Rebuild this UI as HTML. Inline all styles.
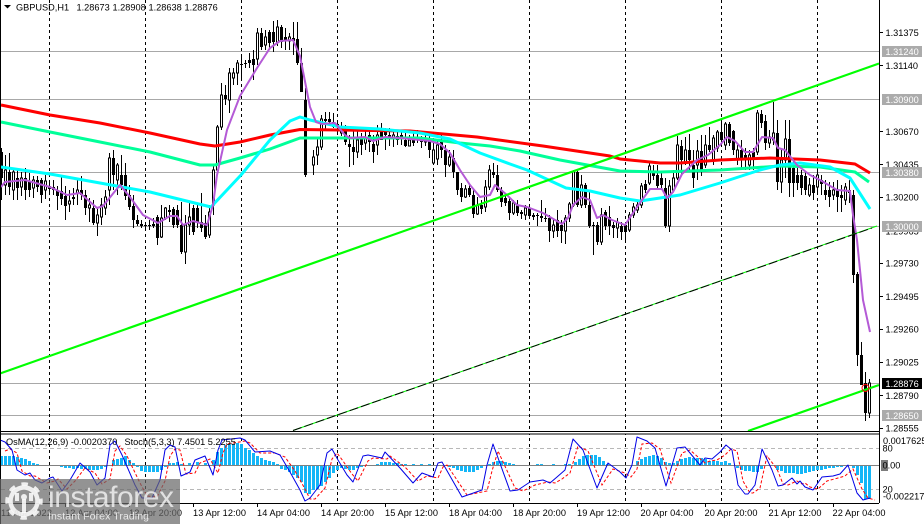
<!DOCTYPE html>
<html><head><meta charset="utf-8"><style>
html,body{margin:0;padding:0;background:#fff;width:924px;height:524px;overflow:hidden}
svg{display:block;position:absolute;left:0;top:0}
text{font-family:"Liberation Sans",sans-serif;font-size:9.2px;fill:#000}
.w{fill:#fff}
</style></head><body>
<svg width="924" height="524" viewBox="0 0 924 524" xmlns="http://www.w3.org/2000/svg">
<rect width="924" height="524" fill="#fff"/>
<!-- horizontal levels -->
<g shape-rendering="crispEdges" stroke="#a8a8a8" stroke-width="1">
<path d="M1 51.5H879M1 99.5H879M1 172.5H879M1 226.5H879M1 383.5H879M1 415.5H879"/>
</g>
<!-- vertical periods -->
<path shape-rendering="crispEdges" d="M49.5 0V503M145.5 0V503M241.5 0V503M337.5 0V503M433.5 0V503M529.5 0V503M625.5 0V503M721.5 0V503M817.5 0V503" stroke="#000" stroke-width="1" stroke-dasharray="3 3" fill="none"/>
<!-- candles -->
<g shape-rendering="crispEdges" fill="none" stroke="#000">
<path stroke-width="1" d="M1.5 148V200M5.5 155V195M9.5 153V195M13.5 168V200M17.5 168V200M21.5 172V196M25.5 168V200M29.5 173V197M33.5 176V198M37.5 176V192M41.5 178V203M45.5 175V199M49.5 182V195M53.5 180V195M57.5 186V210M61.5 176V205M65.5 186V220M69.5 190V212M73.5 188V205M77.5 180V205M81.5 176V200M85.5 190V215M89.5 198V222M93.5 200V225M97.5 207V236M101.5 198V225M105.5 190V215M109.5 153V205M113.5 150V190M117.5 163V195M121.5 155V190M125.5 163V200M129.5 185V210M133.5 195V228M137.5 215V226M141.5 220V228M145.5 222V228M149.5 220V230M153.5 218V228M157.5 215V245M161.5 205V238M165.5 207V220M169.5 205V222M173.5 207V228M177.5 205V228M181.5 202V254M185.5 215V264M189.5 203V235M193.5 205V235M197.5 203V228M201.5 193V232M205.5 215V239M209.5 205V238M213.5 165V215M217.5 125V175M221.5 83V130M225.5 85V105M229.5 68V113M233.5 68V85M237.5 60V85M241.5 55V78M245.5 60V68M249.5 53V68M253.5 50V80M257.5 28V65M261.5 28V50M265.5 30V50M269.5 30V48M273.5 21V52M277.5 20V46M281.5 25V48M285.5 28V50M289.5 33V50M293.5 22V55M297.5 22V65M301.5 48V92M305.5 88V177M313.5 150V175M317.5 137V165M321.5 115V150M325.5 112V130M329.5 112V125M333.5 113V128M337.5 122V135M341.5 122V136M345.5 125V145M349.5 135V167M353.5 130V165M357.5 130V158M361.5 133V155M365.5 128V150M369.5 128V152M373.5 135V163M377.5 125V155M381.5 123V140M385.5 128V150M389.5 128V146M393.5 130V147M397.5 132V145M401.5 130V145M405.5 133V147M409.5 135V146M413.5 133V146M417.5 130V143M421.5 136V148M425.5 133V146M429.5 135V158M433.5 138V164M437.5 140V165M441.5 135V158M445.5 145V177M449.5 150V167M453.5 150V178M457.5 172V195M461.5 183V202M465.5 185V198M469.5 185V197M473.5 190V218M477.5 197V215M481.5 200V214M485.5 180V212M489.5 165V190M493.5 163V178M497.5 165V192M501.5 187V207M505.5 195V206M509.5 198V220M513.5 200V215M517.5 200V216M521.5 210V219M525.5 205V220M529.5 205V218M533.5 213V220M537.5 213V226M541.5 200V222M545.5 208V222M549.5 215V242M553.5 220V238M557.5 210V237M561.5 220V243M565.5 215V244M569.5 202V222M573.5 170V207M577.5 170V207M581.5 175V208M585.5 183V208M589.5 192V228M593.5 222V255M597.5 222V245M601.5 208V245M605.5 210V230M609.5 206V235M613.5 222V238M617.5 218V238M621.5 222V240M625.5 222V243M629.5 212V232M633.5 203V218M637.5 200V213M641.5 183V208M645.5 180V193M649.5 163V185M653.5 165V180M657.5 165V190M661.5 172V190M665.5 178V228M669.5 180V232M673.5 170V192M677.5 136V180M681.5 140V175M685.5 137V165M689.5 134V170M693.5 150V188M697.5 140V180M701.5 135V176M705.5 135V168M709.5 127V152M713.5 135V165M717.5 130V152M721.5 122V142M725.5 122V150M729.5 122V146M733.5 130V155M737.5 145V165M741.5 140V168M745.5 148V170M749.5 150V170M753.5 148V170M757.5 110V155M761.5 110V128M765.5 115V150M769.5 130V148M773.5 102V145M777.5 120V190M781.5 150V193M785.5 120V178M789.5 120V197M793.5 160V197M797.5 165V190M801.5 170V195M805.5 172V195M809.5 178V197M813.5 175V200M817.5 170V192M821.5 175V195M825.5 180V200M829.5 182V207M833.5 182V200M837.5 180V212M841.5 185V212M845.5 183V205M849.5 180V203M853.5 190V283M857.5 272V366M861.5 342V385M865.5 372V421M869.5 379V418"/>
<path stroke-width="3" d="M1.5 152V178M9.5 172V187M17.5 178V188M25.5 178V190M29.5 181V190M37.5 180V187M41.5 180V195M49.5 186V189M53.5 187V190M57.5 190V196M61.5 191V199M65.5 196V206M73.5 197V199M81.5 190V195M85.5 195V208M93.5 208V223M113.5 158V175M121.5 175V185M125.5 175V196M129.5 195V207M133.5 206V220M137.5 220V224M141.5 224V226M145.5 225V226M149.5 225V226M153.5 224V226M157.5 217V238M169.5 210V212M173.5 209V225M177.5 210V225M181.5 225V252M193.5 208V232M197.5 208V222M201.5 222V228M205.5 223V237M225.5 95V99M241.5 64V65M245.5 63V64M249.5 60V63M253.5 59V65M261.5 33V47M269.5 32V43M273.5 32V42M281.5 27V42M285.5 37V41M293.5 38V41M297.5 39V63M301.5 63V92M305.5 100V175M325.5 119V121M329.5 119V122M333.5 122V127M337.5 124V127M345.5 130V142M349.5 144V147M353.5 147V152M361.5 138V145M369.5 135V142M373.5 144V152M381.5 132V140M385.5 131V135M389.5 135V137M397.5 136V140M401.5 135V138M405.5 140V146M413.5 140V143M421.5 138V142M429.5 140V150M441.5 140V150M445.5 150V165M453.5 158V172M457.5 172V190M461.5 188V197M469.5 188V195M473.5 195V214M481.5 205V209M493.5 172V175M497.5 175V190M501.5 190V202M505.5 198V203M509.5 201V213M517.5 205V213M521.5 212V214M529.5 208V216M533.5 215V217M537.5 215V216M541.5 216V218M545.5 218V219M549.5 218V231M557.5 220V231M561.5 225V231M577.5 172V205M585.5 185V205M589.5 205V226M593.5 225V226M597.5 225V242M605.5 212V226M609.5 217V226M613.5 225V228M621.5 226V232M625.5 225V232M645.5 184V190M653.5 172V176M657.5 175V186M661.5 178V185M665.5 188V226M681.5 146V160M689.5 150V160M693.5 165V178M701.5 151V172M709.5 145V150M721.5 132V140M729.5 124V143M733.5 131V150M741.5 150V160M745.5 155V160M753.5 152V158M761.5 114V123M765.5 121V143M777.5 133V182M789.5 139V183M793.5 168V183M797.5 175V183M801.5 175V188M805.5 176V190M813.5 185V193M821.5 180V184M825.5 190V195M829.5 190V197M837.5 190V197M841.5 195V198M849.5 190V193M853.5 195V275M857.5 274V355M861.5 355V385M865.5 383V413"/>
<path stroke-width="1" fill="#fff" d="M4.5 170h2V185h-2zM12.5 172h2V190h-2zM20.5 178h2V187h-2zM32.5 180h2V188h-2zM44.5 181h2V190h-2zM68.5 201h2V204h-2zM76.5 190h2V193h-2zM88.5 205h2V208h-2zM96.5 215h2V223h-2zM100.5 205h2V217h-2zM104.5 197h2V208h-2zM108.5 158h2V190h-2zM116.5 165h2V180h-2zM160.5 218h2V237h-2zM164.5 208h2V218h-2zM184.5 225h2V252h-2zM188.5 217h2V225h-2zM208.5 212h2V235h-2zM212.5 170h2V205h-2zM216.5 127h2V170h-2zM220.5 95h2V127h-2zM228.5 73h2V100h-2zM232.5 73h2V78h-2zM236.5 63h2V73h-2zM256.5 33h2V59h-2zM264.5 37h2V45h-2zM276.5 27h2V42h-2zM288.5 37h2V41h-2zM312.5 157h2V165h-2zM316.5 147h2V155h-2zM320.5 119h2V147h-2zM340.5 127h2V133h-2zM356.5 140h2V152h-2zM364.5 137h2V143h-2zM376.5 135h2V145h-2zM392.5 135h2V139h-2zM408.5 140h2V146h-2zM416.5 137h2V140h-2zM424.5 138h2V142h-2zM432.5 150h2V163h-2zM436.5 145h2V159h-2zM448.5 157h2V165h-2zM464.5 189h2V197h-2zM476.5 205h2V214h-2zM484.5 187h2V207h-2zM488.5 170h2V187h-2zM512.5 203h2V213h-2zM524.5 208h2V215h-2zM552.5 225h2V231h-2zM564.5 218h2V231h-2zM568.5 204h2V218h-2zM572.5 172h2V205h-2zM580.5 185h2V205h-2zM600.5 215h2V242h-2zM616.5 222h2V228h-2zM628.5 215h2V230h-2zM632.5 207h2V215h-2zM636.5 205h2V210h-2zM640.5 186h2V205h-2zM648.5 166h2V183h-2zM668.5 186h2V226h-2zM672.5 178h2V190h-2zM676.5 145h2V178h-2zM684.5 150h2V163h-2zM696.5 151h2V165h-2zM704.5 145h2V165h-2zM712.5 138h2V160h-2zM716.5 132h2V148h-2zM724.5 124h2V145h-2zM736.5 150h2V160h-2zM748.5 155h2V165h-2zM756.5 113h2V152h-2zM768.5 137h2V143h-2zM772.5 133h2V140h-2zM780.5 160h2V182h-2zM784.5 139h2V160h-2zM808.5 185h2V195h-2zM816.5 175h2V187h-2zM832.5 190h2V195h-2zM844.5 187h2V200h-2zM868.5 383h2V413h-2z"/>
</g>
<!-- moving averages -->
<g fill="none" stroke-linejoin="round" stroke-linecap="butt">
<polyline stroke="#ff0000" stroke-width="3" points="1,105 50,115 100,123 150,133 200,144 215,146 240,142 270,135 300,129.5 340,130 410,131 477,137 543,146 610,156 620,159 660,163 680,163 720,160 770,158 820,160 855,164 870,173"/>
<polyline stroke="#00ff99" stroke-width="3" points="1,122 50,132 100,142 150,152 200,165 215,165 240,158 270,149 300,138 310,138 340,138 420,138 460,143 490,146 520,151 560,160 620,171 660,172 720,170 780,166 820,167 855,172 869,182"/>
<polyline stroke="#00ffff" stroke-width="3" points="1,167 50,174 100,183 150,192 211,207 241,175 270,140 290,121 300,117 310,120 340,127 380,129 420,133 450,139 480,153 510,164 527,170 566,188 590,191 620,198 640,201 660,198 680,195 720,183 760,170 780,165 800,163 830,167 850,178 870,209"/>
<polyline stroke="#b45ad6" stroke-width="2" points="1,187 5,182 25,180 50,187 67,195 80,193 97,208 103,206 120,185 130,197 143,215 158,223 170,216 177,216 183,225 193,221 207,225 213,205 217,175 227,130 240,96 257,68 270,48 280,41 293,40 300,56 310,107 316,122 322,124 335,123 345,135 350,138 365,137 373,141 385,137 400,138 430,141 440,144 450,153 460,170 470,185 480,197 490,195 495,185 507,195 517,205 527,207 543,213 562,224 568,218 573,205 582,197 590,200 597,218 603,215 612,220 625,225 637,207 650,189 662,189 667,198 673,192 682,174 697,160 708,155 720,145 727,137 735,141 745,152 753,152 762,137 773,138 778,148 785,150 797,165 810,175 820,180 837,190 850,191 853,215 857,240 863,300 870,332"/>
</g>
<!-- trend lines -->
<g fill="none">
<path d="M0 373.5L879 63.5" stroke="#00ff00" stroke-width="2.2"/>
<path d="M293 430.5L877 226" stroke="#00ff00" stroke-width="1"/>
<path d="M293 430.5L872 228" stroke="#000" stroke-width="1" stroke-dasharray="9 3"/>
<path d="M748 431L879 385" stroke="#00ff00" stroke-width="2.2"/>
<circle cx="865.5" cy="388" r="3.5" stroke="#f00" stroke-width="1"/>
</g>
<!-- indicator window -->
<rect x="1" y="432" width="878" height="2" fill="#fff"/>
<g shape-rendering="crispEdges">
<path d="M0 431.5H879M0 434H879M0 503.5H879" stroke="#000" stroke-width="1"/>
<path d="M1 448.5H879M1 489.5H879" stroke="#b8b8b8" stroke-width="1" stroke-dasharray="4 3"/>
<path stroke="#14b6f7" stroke-width="3" d="M1.5 465V456M5.5 465V456M9.5 465V456M13.5 465V456M17.5 465V457M21.5 465V458M25.5 465V459M29.5 465V461M33.5 465V463M37.5 465V464M61.5 465V467M65.5 465V468M69.5 465V468M73.5 465V469M77.5 465V468M81.5 465V469M85.5 465V469M89.5 465V470M93.5 465V470M97.5 465V470M101.5 465V469M105.5 465V467M113.5 465V460M117.5 465V459M121.5 465V458M125.5 465V456M129.5 465V460M133.5 465V463M137.5 465V467M141.5 465V471M145.5 465V472M149.5 465V472M153.5 465V472M157.5 465V472M161.5 465V470M165.5 465V467M169.5 465V463M173.5 465V463M177.5 465V462M181.5 465V464M189.5 465V463M197.5 465V462M205.5 465V463M213.5 465V460M217.5 465V452M221.5 465V448M225.5 465V445M229.5 465V444M233.5 465V444M237.5 465V443M241.5 465V444M245.5 465V448M249.5 465V450M253.5 465V453M257.5 465V456M261.5 465V458M265.5 465V460M269.5 465V461M273.5 465V462M277.5 465V464M281.5 465V469M285.5 465V470M289.5 465V472M293.5 465V475M297.5 465V478M301.5 465V482M305.5 465V493M309.5 465V494M313.5 465V490M317.5 465V489M321.5 465V486M325.5 465V482M329.5 465V478M333.5 465V473M337.5 465V470M341.5 465V468M345.5 465V469M349.5 465V470M353.5 465V470M357.5 465V468M361.5 465V467M365.5 465V466M377.5 465V464M381.5 465V462M385.5 465V462M389.5 465V462M393.5 465V463M397.5 465V463M401.5 465V464M405.5 465V464M413.5 465V464M421.5 465V464M429.5 465V464M437.5 465V466M441.5 465V466M449.5 465V467M453.5 465V468M457.5 465V470M461.5 465V471M465.5 465V472M469.5 465V472M473.5 465V472M477.5 465V470M481.5 465V468M485.5 465V466M489.5 465V464M493.5 465V462M497.5 465V461M501.5 465V461M505.5 465V462M509.5 465V463M513.5 465V464M521.5 465V466M537.5 465V464M541.5 465V464M553.5 465V464M565.5 465V464M569.5 465V464M575.5 465V462M579.5 465V459M583.5 465V456M587.5 465V455M591.5 465V455M595.5 465V455M599.5 465V457M603.5 465V461M607.5 465V464M611.5 465V466M637.5 465V461M641.5 465V459M645.5 465V457M649.5 465V456M653.5 465V455M657.5 465V456M661.5 465V458M665.5 465V462M669.5 465V463M673.5 465V463M677.5 465V461M681.5 465V459M685.5 465V458M689.5 465V457M693.5 465V458M697.5 465V458M701.5 465V458M705.5 465V459M709.5 465V461M713.5 465V461M717.5 465V461M721.5 465V462M725.5 465V461M729.5 465V463M737.5 465V468M741.5 465V470M745.5 465V471M749.5 465V471M753.5 465V472M757.5 465V472M761.5 465V469M777.5 465V470M781.5 465V471M785.5 465V473M789.5 465V473M793.5 465V473M797.5 465V474M801.5 465V474M805.5 465V473M809.5 465V472M813.5 465V471M817.5 465V470M821.5 465V470M825.5 465V469M829.5 465V468M833.5 465V468M837.5 465V467M841.5 465V467M845.5 465V466M849.5 465V466M853.5 465V468M857.5 465V475M861.5 465V483M865.5 465V499M869.5 465V499"/>
<path d="M1 465.5H879" stroke="#808080" stroke-width="1"/>
</g>
<g fill="none">
<polyline stroke="#ff0000" stroke-width="1" stroke-dasharray="3 2" transform="translate(5,1)" points="0,450 5,448 12,452 17,470 25,475 30,475 35,478 42,482 50,480 53,478 62,488 70,480 80,467 90,472 97,483 105,478 110,450 115,445 122,455 135,482 142,495 152,496 160,480 165,455 170,448 175,449 181,473 190,472 195,462 205,458 213,472 218,452 222,443 240,440 245,442 255,452 270,452 280,456 290,470 300,488 305,498 310,498 320,487 327,458 332,452 338,460 347,473 353,480 363,460 368,457 382,458 385,455 400,466 413,480 422,475 433,477 438,466 442,464 462,494 482,490 487,470 493,450 510,487 518,490 530,484 543,481 550,482 557,478 565,472 573,445 583,450 597,484 608,468 620,472 626,476 632,468 637,443 647,442 655,448 666,482 677,452 685,449 700,462 705,460 712,459 720,454 726,448 732,450 738,480 745,492 748,492 755,487 762,455 772,468 778,483 783,484 792,480 797,483 800,482 805,486 813,488 822,480 833,477 840,475 848,468 857,488 863,497 870,499"/>
<polyline stroke="#0000e6" stroke-width="1" stroke-linejoin="round" points="0,440 5,442 12,450 17,470 25,475 30,473 35,480 42,483 50,478 53,477 62,491 70,480 80,463 90,472 97,485 105,478 110,445 115,441 122,455 135,485 142,498 152,498 160,480 165,450 170,445 175,447 181,476 190,472 195,460 205,456 213,475 218,450 222,440 240,438 245,440 255,452 270,451 280,455 290,472 300,490 305,501 310,498 320,485 327,453 332,449 338,460 347,475 353,482 363,456 368,455 382,458 385,452 400,468 413,483 422,473 433,477 438,463 442,462 462,497 482,490 487,465 493,444 510,491 518,490 530,482 543,480 550,483 557,477 565,470 573,439 583,450 597,488 608,463 620,472 626,478 632,465 637,437 647,441 655,448 666,486 677,448 685,447 700,465 705,458 712,459 720,452 726,445 732,450 738,485 745,494 748,494 755,485 762,449 772,470 778,486 783,485 792,478 797,484 800,481 805,487 813,490 822,477 833,476 840,474 848,465 857,493 863,500 870,498"/>
</g>
<!-- axis -->
<g shape-rendering="crispEdges" stroke="#000" stroke-width="1" fill="none">
<path d="M0.5 0V524M879.5 0V503"/>
<path d="M879 32.5h4M879 65.5h4M879 131.5h4M879 164.5h4M879 197.5h4M879 263.5h4M879 296.5h4M879 329.5h4M879 362.5h4M879 395.5h4M879 428.5h4"/>
<path d="M65.5 503v4M129.5 503v4M193.5 503v4M257.5 503v4M321.5 503v4M385.5 503v4M449.5 503v4M513.5 503v4M577.5 503v4M641.5 503v4M705.5 503v4M769.5 503v4M833.5 503v4"/>
</g>
<!-- right axis labels -->
<g>
<text x="885.5" y="36">1.31375</text>
<text x="885.5" y="69">1.31140</text>
<text x="885.5" y="135">1.30670</text>
<text x="885.5" y="168">1.30435</text>
<text x="885.5" y="200.500">1.30200</text>
<text x="885.5" y="234.500">1.29965</text>
<text x="885.5" y="266.500">1.29730</text>
<text x="885.5" y="300">1.29495</text>
<text x="885.5" y="332.500">1.29260</text>
<text x="885.5" y="365.500">1.29025</text>
<text x="885.5" y="399">1.28790</text>
<text x="885.5" y="431.500">1.28555</text>
</g>
<g shape-rendering="crispEdges">
<rect x="882" y="46" width="40" height="11" fill="#ababab"/>
<rect x="882" y="94" width="40" height="11" fill="#ababab"/>
<rect x="882" y="167" width="40" height="11" fill="#ababab"/>
<rect x="882" y="221" width="40" height="11" fill="#ababab"/>
<rect x="882" y="378" width="40" height="11" fill="#000"/>
<rect x="882" y="410" width="40" height="11" fill="#ababab"/>
<rect x="881" y="460" width="7" height="11" fill="#7c7c7c"/>
</g>
<text class="w" x="885.5" y="54.800">1.31240</text>
<text class="w" x="885.5" y="102.800">1.30900</text>
<text class="w" x="885.5" y="175.800">1.30380</text>
<text class="w" x="885.5" y="229.800">1.30000</text>
<text class="w" x="885.5" y="386.800">1.28876</text>
<text class="w" x="885.5" y="418.800">1.28650</text>
<text x="883" y="444">0.0017625</text>
<text x="882.500" y="451.500">80</text>
<text x="882.500" y="468.500">0.00</text>
<text x="882.500" y="492.500">20</text>
<text x="883" y="499.500">-0.002217</text>
<!-- title -->
<path d="M4 5h7l-3.500 3.500z" fill="#000"/>
<text x="16" y="10.500">GBPUSD,H1</text>
<text x="76.500" y="10.500">1.28673</text>
<text x="112.500" y="10.500">1.28908</text>
<text x="148.500" y="10.500">1.28638</text>
<text x="184.500" y="10.500">1.28876</text>
<text x="6" y="445" fill="#222">OsMA(12,26,9) -0.0020370</text>
<text x="124.500" y="445">Stoch(5,3,3) 7.4501 5.2255</text>
<!-- date axis -->
<g>
<text x="1" y="516" textLength="51">11 Apr 2022</text>
<text x="65" y="516" textLength="53">12 Apr 04:00</text>
<text x="129" y="516" textLength="53">12 Apr 20:00</text>
<text x="193" y="516" textLength="53">13 Apr 12:00</text>
<text x="257" y="516" textLength="53">14 Apr 04:00</text>
<text x="321" y="516" textLength="53">14 Apr 20:00</text>
<text x="385" y="516" textLength="53">15 Apr 12:00</text>
<text x="449" y="516" textLength="53">18 Apr 04:00</text>
<text x="513" y="516" textLength="53">18 Apr 20:00</text>
<text x="577" y="516" textLength="53">19 Apr 12:00</text>
<text x="640.500" y="516" textLength="53">20 Apr 04:00</text>
<text x="704.500" y="516" textLength="53">20 Apr 20:00</text>
<text x="768.500" y="516" textLength="53">21 Apr 12:00</text>
<text x="832.500" y="516" textLength="53">22 Apr 04:00</text>
</g>
<!-- watermark -->
<rect x="0" y="479" width="180" height="45" fill="#6a6a6a" fill-opacity=".72"/>
<g fill="#fff" fill-opacity=".85">
<circle cx="24" cy="501" r="13.500" fill="none" stroke="#fff" stroke-opacity=".85" stroke-width="4.500"/>
<circle cx="24" cy="501" r="17" fill="none" stroke="#fff" stroke-opacity=".85" stroke-width="3.500" stroke-dasharray="6.500 6.900" stroke-dashoffset="3"/>
<circle cx="24" cy="497" r="3"/>
<rect x="22" y="499" width="4" height="14"/>
<path d="M15 493h4v8h-4zM29 493h4v8h-4z"/>
</g>
<text x="48" y="507" style="font-size:30px;fill:#fff;fill-opacity:.72" textLength="126">instaforex</text>
<text x="48" y="519.500" style="font-size:10.500px;fill:#fff;fill-opacity:.8" textLength="101">Instant Forex Trading</text>
</svg>
</body></html>
